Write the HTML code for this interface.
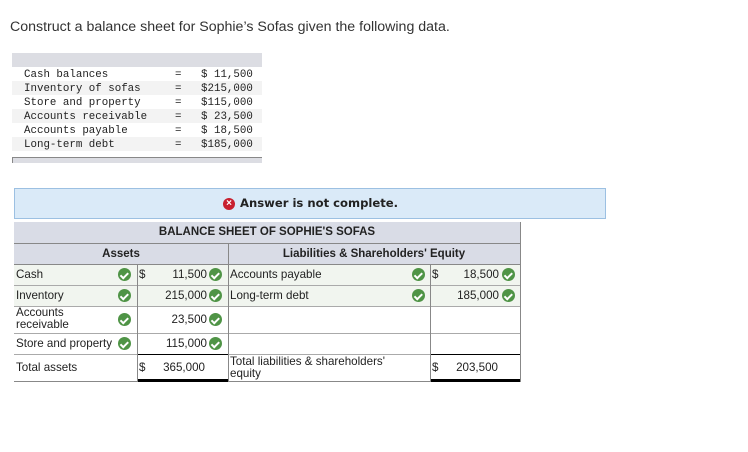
<!DOCTYPE html>
<html><head><style>
body{margin:0;width:748px;height:452px;background:#fff;font-family:"Liberation Sans",Arial,sans-serif;position:relative;overflow:hidden}
.a{position:absolute}
.mono{font-family:"Liberation Mono",monospace;font-size:10.8px;color:#222}
.ck{position:absolute;width:13px;height:13px;border-radius:50%;background:#4f9446}
.ck:after{content:"";position:absolute;left:3.5px;top:2.5px;width:3px;height:5.5px;border:solid #fff;border-width:0 2px 2px 0;transform:rotate(45deg)}
.t{font-size:11.6px;color:#222}
.b{font-weight:bold;font-size:11.5px}
.vl{position:absolute;background:#888;width:1px}
.hl{position:absolute;background:#888;height:1px}
</style></head><body>
<div class="a" style="left:10px;top:19px;font-size:14.2px;color:#333">Construct a balance sheet for Sophie’s Sofas given the following data.</div>
<div class="a" style="left:12px;top:53px;width:250px;height:14px;background:#dcdde3"></div>
<div class="a" style="left:12px;top:81px;width:250px;height:14px;background:#f3f3f3"></div>
<div class="a" style="left:12px;top:109px;width:250px;height:14px;background:#f3f3f3"></div>
<div class="a" style="left:12px;top:137px;width:250px;height:14px;background:#f3f3f3"></div>
<div class="a mono" style="left:24px;top:68px;line-height:14px;white-space:pre">Cash balances
Inventory of sofas
Store and property
Accounts receivable
Accounts payable
Long-term debt</div>
<div class="a mono" style="left:175px;top:68px;line-height:14px;white-space:pre">=
=
=
=
=
=</div>
<div class="a mono" style="left:201px;top:68px;line-height:14px;white-space:pre">$ 11,500
$215,000
$115,000
$ 23,500
$ 18,500
$185,000</div>
<div class="a" style="left:12px;top:157px;width:250px;height:6px;background:#dcdde3;border-top:1px solid #888;border-left:1px solid #888;box-sizing:border-box"></div>

<div class="a" style="left:14px;top:188px;width:592px;height:31px;background:#daeaf8;border:1px solid #9cc0e2;box-sizing:border-box"></div>
<div class="a" style="left:223px;top:198px;width:12px;height:12px;border-radius:50%;background:#c8202f;color:#fff;font-size:10px;font-weight:bold;line-height:12px;text-align:center">×</div>
<div class="a" style="left:240px;top:196px;font-weight:bold;color:#222;font-family:'DejaVu Sans',sans-serif;font-size:11.6px">Answer is not complete.</div>

<div class="a" style="left:14px;top:222px;width:506px;height:42px;background:#d9dce6"></div>
<div class="a" style="left:14px;top:264px;width:506px;height:42px;background:#f1f5ef"></div>
<div class="hl" style="left:14px;top:243px;width:506px"></div>
<div class="hl" style="left:14px;top:264px;width:506px"></div>
<div class="hl" style="left:14px;top:285px;width:506px;background:#aaa"></div>
<div class="hl" style="left:14px;top:306px;width:506px;background:#aaa"></div>
<div class="hl" style="left:14px;top:333px;width:506px;background:#aaa"></div>
<div class="hl" style="left:14px;top:354px;width:506px;background:#aaa"></div>
<div class="hl" style="left:137px;top:354px;width:91px;background:#000"></div>
<div class="hl" style="left:430px;top:354px;width:90px;background:#000"></div>
<div class="hl" style="left:14px;top:381px;width:506px"></div>
<div class="a" style="left:137px;top:379px;width:91px;height:3px;background:#000"></div>
<div class="a" style="left:430px;top:379px;width:90px;height:3px;background:#000"></div>
<div class="vl" style="left:520px;top:222px;height:160px"></div>
<div class="vl" style="left:228px;top:243px;height:139px"></div>
<div class="vl" style="left:137px;top:264px;height:118px"></div>
<div class="vl" style="left:430px;top:264px;height:118px"></div>

<div class="a t b" style="left:14px;width:506px;top:226px;text-align:center">BALANCE SHEET OF SOPHIE'S SOFAS</div>
<div class="a t b" style="left:14px;width:214px;top:248px;text-align:center">Assets</div>
<div class="a t b" style="left:228px;width:292px;top:248px;text-align:center">Liabilities &amp; Shareholders' Equity</div>

<div class="a t" style="left:16px;top:268px">Cash</div><div class="ck" style="left:118px;top:268px"></div>
<div class="a t" style="left:139px;top:268px">$</div><div class="a t" style="left:140px;width:67px;text-align:right;top:268px">11,500</div><div class="ck" style="left:209px;top:268px"></div>
<div class="a t" style="left:230px;top:268px">Accounts payable</div><div class="ck" style="left:412px;top:268px"></div>
<div class="a t" style="left:432px;top:268px">$</div><div class="a t" style="left:440px;width:59px;text-align:right;top:268px">18,500</div><div class="ck" style="left:502px;top:268px"></div>

<div class="a t" style="left:16px;top:289px">Inventory</div><div class="ck" style="left:118px;top:289px"></div>
<div class="a t" style="left:140px;width:67px;text-align:right;top:289px">215,000</div><div class="ck" style="left:209px;top:289px"></div>
<div class="a t" style="left:230px;top:289px">Long-term debt</div><div class="ck" style="left:412px;top:289px"></div>
<div class="a t" style="left:440px;width:59px;text-align:right;top:289px">185,000</div><div class="ck" style="left:502px;top:289px"></div>

<div class="a t" style="left:16px;top:307px;line-height:12px">Accounts<br>receivable</div><div class="ck" style="left:118px;top:313px"></div>
<div class="a t" style="left:140px;width:67px;text-align:right;top:313px">23,500</div><div class="ck" style="left:209px;top:313px"></div>

<div class="a t" style="left:16px;top:337px">Store and property</div><div class="ck" style="left:118px;top:337px"></div>
<div class="a t" style="left:140px;width:67px;text-align:right;top:337px">115,000</div><div class="ck" style="left:209px;top:337px"></div>

<div class="a t" style="left:16px;top:361px">Total assets</div>
<div class="a t" style="left:139px;top:361px">$</div><div class="a t" style="left:140px;width:65px;text-align:right;top:361px">365,000</div>
<div class="a t" style="left:230px;top:356px;line-height:12px">Total liabilities &amp; shareholders'<br>equity</div>
<div class="a t" style="left:432px;top:361px">$</div><div class="a t" style="left:440px;width:58px;text-align:right;top:361px">203,500</div>
</body></html>
